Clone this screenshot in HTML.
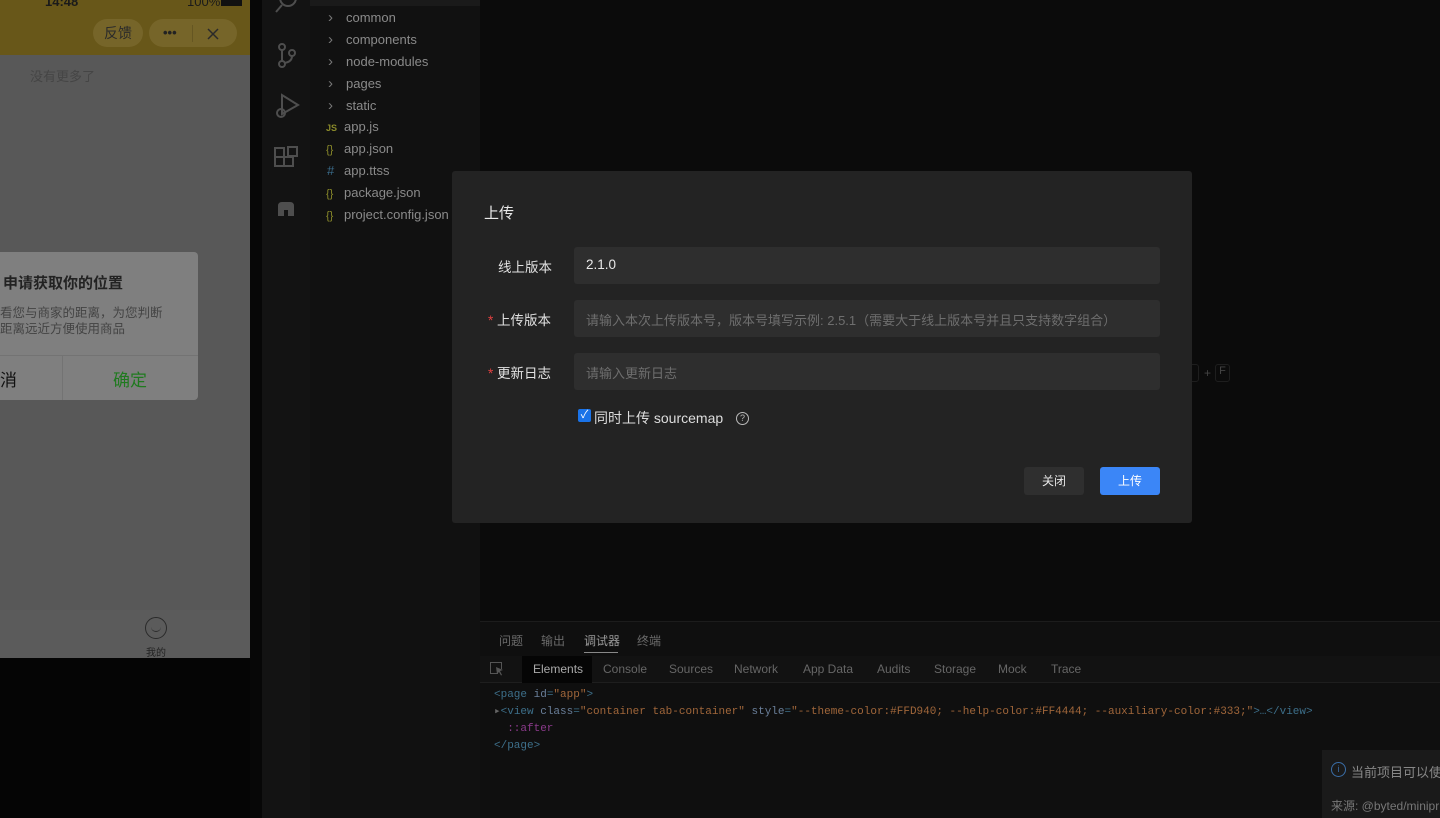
<!DOCTYPE html>
<html><head><meta charset="utf-8"><style>
*{margin:0;padding:0;box-sizing:border-box}
body{width:1440px;height:818px;overflow:hidden;background:#0b0b0b;font-family:"Liberation Sans","Noto Sans CJK SC",sans-serif;position:relative}
.a{position:absolute}
.mono{font-family:"Liberation Mono","DejaVu Sans Mono",monospace}
.tree div{position:absolute;left:0;font-size:13px;color:#8a8a8a;white-space:nowrap}
.tree b{display:inline-block;width:18px;font-weight:normal;font-size:15px;color:#777}
</style></head><body>
<!-- phone -->
<div class="a" style="left:0;top:0;width:250px;height:658px;background:#585858"></div>
<div class="a" style="left:0;top:0;width:250px;height:55px;background:#685719"></div>
<div class="a" style="left:45px;top:-6px;font-size:13px;color:#1a1a1a;font-weight:bold">14:48</div>
<div class="a" style="left:187px;top:-6px;font-size:13px;color:#1a1a1a">100%</div>
<div class="a" style="left:221px;top:-3px;width:21px;height:9px;background:#111"></div>
<div class="a" style="left:93px;top:19px;width:50px;height:28px;border-radius:14px;background:#766529;font-size:14px;color:#2a2a2a;text-align:center;line-height:28px">反馈</div>
<div class="a" style="left:149px;top:19px;width:88px;height:28px;border-radius:14px;background:#766529"></div>
<div class="a" style="left:163px;top:25px;font-size:13px;color:#222;font-weight:bold">•••</div>
<div class="a" style="left:192px;top:25px;width:1px;height:17px;background:#655622"></div>
<svg class="a" style="left:207px;top:28px" width="12" height="12" stroke="#2a2a2a" stroke-width="1.5"><line x1="1" y1="1" x2="11" y2="11"/><line x1="11" y1="1" x2="1" y2="11"/></svg>
<div class="a" style="left:30px;top:66px;font-size:13px;color:#454545">没有更多了</div>
<div class="a" style="left:-10px;top:252px;width:208px;height:148px;background:#7f7f7f;border-radius:4px"></div>
<div class="a" style="left:3px;top:272px;font-size:15px;font-weight:bold;color:#222">申请获取你的位置</div>
<div class="a" style="left:0;top:305px;font-size:12.5px;color:#444;line-height:16px">看您与商家的距离，为您判断<br>距离远近方便使用商品</div>
<div class="a" style="left:0;top:355px;width:198px;height:1px;background:#737373"></div>
<div class="a" style="left:62px;top:356px;width:1px;height:44px;background:#737373"></div>
<div class="a" style="left:0;top:366px;font-size:17px;color:#111">消</div>
<div class="a" style="left:113px;top:366px;font-size:17px;color:#1f7a1f">确定</div>
<div class="a" style="left:0;top:610px;width:250px;height:48px;background:#5b5b5b"></div>
<div class="a" style="left:145px;top:617px;width:22px;height:22px;border:1.5px solid #2a2a2a;border-radius:50%"></div>
<div class="a" style="left:151px;top:627px;width:10px;height:5px;border-bottom:1.5px solid #2a2a2a;border-radius:0 0 6px 6px"></div>
<div class="a" style="left:146px;top:644px;font-size:10px;color:#222">我的</div>
<div class="a" style="left:0;top:658px;width:262px;height:160px;background:#050505"></div>
<div class="a" style="left:250px;top:0;width:12px;height:818px;background:#070707"></div>
<!-- activity bar -->
<div class="a" style="left:262px;top:0;width:48px;height:818px;background:#131313"></div>
<svg class="a" style="left:262px;top:0" width="48" height="230" fill="none" stroke="#4e4e4e" stroke-width="2">
<circle cx="26" cy="-2" r="8"/><line x1="20" y1="5" x2="14" y2="12"/>
<circle cx="20" cy="47" r="3"/><circle cx="20" cy="64" r="3"/><circle cx="30" cy="53" r="3"/><line x1="20" y1="50" x2="20" y2="61"/><path d="M30 56 Q30 62 22 63"/>
<path d="M20 95 L20 114 L36 105 Z"/><circle cx="19" cy="113" r="4"/>
<rect x="13" y="157" width="9" height="9"/><rect x="13" y="148" width="9" height="9"/><rect x="22" y="157" width="9" height="9"/><rect x="26" y="147" width="9" height="9"/>
<path d="M16 216 V206 Q16 202 20 202 H28 Q32 202 32 206 V216 H26 V210 H22 V216 Z" fill="#4e4e4e" stroke="none"/>
</svg>
<!-- explorer -->
<div class="a" style="left:310px;top:0;width:170px;height:818px;background:#111111"></div>
<div class="a" style="left:310px;top:0;width:170px;height:6px;background:#1a1a1a"></div>
<div class="a tree" style="left:310px;top:0;width:170px;height:230px">
<div style="left:18px;top:9px"><b>›</b>common</div>
<div style="left:18px;top:31px"><b>›</b>components</div>
<div style="left:18px;top:53px"><b>›</b>node-modules</div>
<div style="left:18px;top:75px"><b>›</b>pages</div>
<div style="left:18px;top:97px"><b>›</b>static</div>
<div style="left:16px;top:119px"><span style="display:inline-block;width:18px;color:#8a8a2a;font-size:9px;font-weight:bold">JS</span>app.js</div>
<div style="left:16px;top:141px"><span style="display:inline-block;width:18px;color:#8a8a2a;font-size:11px">{}</span>app.json</div>
<div style="left:17px;top:163px"><span style="display:inline-block;width:17px;color:#3a6b8a">#</span>app.ttss</div>
<div style="left:16px;top:185px"><span style="display:inline-block;width:18px;color:#8a8a2a;font-size:11px">{}</span>package.json</div>
<div style="left:16px;top:207px"><span style="display:inline-block;width:18px;color:#8a8a2a;font-size:11px">{}</span>project.config.json</div>
</div>
<div class="a" style="left:1185px;top:364px;width:14px;height:18px;border:1px solid #1e1e1e;border-radius:3px;color:#444;font-size:11px;padding-left:2px">t</div>
<div class="a" style="left:1204px;top:366px;color:#444;font-size:12px">+</div>
<div class="a" style="left:1215px;top:364px;width:15px;height:18px;border:1px solid #1e1e1e;border-radius:3px;color:#444;font-size:11px;text-align:center">F</div>
<!-- bottom panel -->
<div class="a" style="left:480px;top:621px;width:960px;height:197px;background:#0f0f0f;border-top:1px solid #1c1c1c"></div>
<div class="a" style="left:499px;top:632px;font-size:12px;color:#6a6a6a">问题</div>
<div class="a" style="left:541px;top:632px;font-size:12px;color:#6a6a6a">输出</div>
<div class="a" style="left:584px;top:632px;font-size:12px;color:#9a9a9a">调试器</div>
<div class="a" style="left:584px;top:652px;width:34px;height:1px;background:#888"></div>
<div class="a" style="left:637px;top:632px;font-size:12px;color:#6a6a6a">终端</div>
<div class="a" style="left:480px;top:656px;width:960px;height:27px;background:#121212;border-bottom:1px solid #1e1e1e"></div>
<svg class="a" style="left:489px;top:661px" width="16" height="16" fill="none" stroke="#555"><path d="M9 12.5 H1.5 V1.5 H12.5 V8"/><path d="M7 6 L14 9 L11 10 L13 14 L12 14.5 L10 11 L8 13 Z" fill="#555" stroke="none"/></svg>
<div class="a" style="left:522px;top:656px;width:70px;height:27px;background:#050505"></div>
<div class="a" style="left:480px;top:662px;font-size:12px;color:#666;width:960px;height:20px">
<span class="a" style="left:53px;color:#aaa">Elements</span><span class="a" style="left:123px">Console</span><span class="a" style="left:189px">Sources</span><span class="a" style="left:254px">Network</span><span class="a" style="left:323px">App Data</span><span class="a" style="left:397px">Audits</span><span class="a" style="left:454px">Storage</span><span class="a" style="left:518px">Mock</span><span class="a" style="left:571px">Trace</span></div>
<div class="a mono" style="left:494px;top:687px;font-size:11px;line-height:17px;color:#3d6f8a;white-space:pre">&lt;page <span style="color:#6a7f9a">id</span>=<span style="color:#a0663a">"app"</span>&gt;
<span style="color:#666">▸</span>&lt;view <span style="color:#6a7f9a">class</span>=<span style="color:#a0663a">"container tab-container"</span> <span style="color:#6a7f9a">style</span>=<span style="color:#a0663a">"--theme-color:#FFD940; --help-color:#FF4444; --auxiliary-color:#333;"</span>&gt;…&lt;/view&gt;
  <span style="color:#8a3a8a">::after</span>
&lt;/page&gt;</div>
<div class="a" style="left:1322px;top:750px;width:118px;height:68px;background:#1a1a1a"></div>
<div class="a" style="left:1331px;top:762px;width:15px;height:15px;border:1px solid #3a6ea8;border-radius:50%;color:#3a6ea8;font-size:9px;text-align:center;line-height:13px">i</div>
<div class="a" style="left:1351px;top:762px;font-size:13px;color:#888;white-space:nowrap">当前项目可以使</div>
<div class="a" style="left:1331px;top:797px;font-size:12px;color:#777;white-space:nowrap">来源: @byted/minipr</div>
<!-- modal -->
<div class="a" style="left:452px;top:171px;width:740px;height:352px;background:#232323;border-radius:3px"></div>
<div class="a" style="left:484px;top:202px;font-size:15px;color:#e8e8e8">上传</div>
<div class="a" style="left:498px;top:256px;font-size:13.5px;color:#e0e0e0">线上版本</div>
<div class="a" style="left:488px;top:309px;font-size:13.5px;color:#e0e0e0"><span style="color:#e04040">*</span> 上传版本</div>
<div class="a" style="left:488px;top:362px;font-size:13.5px;color:#e0e0e0"><span style="color:#e04040">*</span> 更新日志</div>
<div class="a" style="left:574px;top:247px;width:586px;height:37px;background:#2e2e2e;border-radius:3px;font-size:13.5px;color:#e8e8e8;padding:10px 12px">2.1.0</div>
<div class="a" style="left:574px;top:300px;width:586px;height:37px;background:#2e2e2e;border-radius:3px;font-size:13px;color:#6e6e6e;padding:10px 12px;white-space:nowrap">请输入本次上传版本号，版本号填写示例: 2.5.1（需要大于线上版本号并且只支持数字组合）</div>
<div class="a" style="left:574px;top:353px;width:586px;height:37px;background:#2e2e2e;border-radius:3px;font-size:13px;color:#6e6e6e;padding:10px 12px">请输入更新日志</div>
<div class="a" style="left:578px;top:409px;width:13px;height:13px;background:#1a73e8;border-radius:2px;color:#fff;font-size:11px;line-height:13px;text-align:center">✓</div>
<div class="a" style="left:594px;top:408px;font-size:14px;color:#ddd">同时上传 sourcemap</div>
<div class="a" style="left:736px;top:412px;width:13px;height:13px;border:1px solid #bbb;border-radius:50%;color:#bbb;font-size:9px;text-align:center;line-height:11px">?</div>
<div class="a" style="left:1024px;top:467px;width:60px;height:28px;background:#2f2f2f;border-radius:3px;color:#e8e8e8;font-size:12px;text-align:center;line-height:28px">关闭</div>
<div class="a" style="left:1100px;top:467px;width:60px;height:28px;background:#3b86f7;border-radius:3px;color:#fff;font-size:12px;text-align:center;line-height:28px">上传</div>
</body></html>
